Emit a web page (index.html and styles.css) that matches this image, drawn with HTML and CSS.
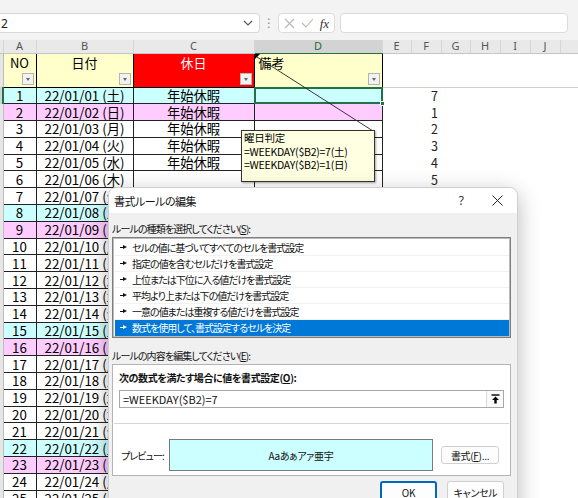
FILE: index.html
```html
<!DOCTYPE html>
<html lang="ja">
<head>
<meta charset="utf-8">
<title>書式ルールの編集</title>
<link rel="stylesheet" href="styles.css">
</head>
<body>
<div class="topbar">
  <div class="namebox"><span>2</span>
    <svg width="10" height="6" viewBox="0 0 10 6"><path d="M1 1l4 4 4-4" fill="none" stroke="#555" stroke-width="1.1"/></svg>
  </div>
  <div class="dots">⋮</div>
  <div class="fxgroup">
    <svg width="11" height="11" viewBox="0 0 11 11"><path d="M1 1l9 9M10 1l-9 9" stroke="#b8b8b8" stroke-width="1.1"/></svg>
    <svg width="13" height="10" viewBox="0 0 13 10"><path d="M1 5l4 4 7-8" fill="none" stroke="#b8b8b8" stroke-width="1.1"/></svg>
    <span class="fx">fx</span>
  </div>
  <div class="formula"></div>
</div>

<table class="sheet">
  <colgroup>
    <col class="w-stub"><col class="w-a"><col class="w-b"><col class="w-c"><col class="w-d">
    <col class="w-e"><col class="w-f"><col class="w-g"><col class="w-h"><col class="w-i"><col class="w-j"><col class="w-k">
  </colgroup>
  <tr class="colhead">
    <th class="stub"></th><th>A</th><th>B</th><th>C</th><th class="on">D</th><th>E</th><th>F</th><th>G</th><th>H</th><th>I</th><th>J</th><th></th>
  </tr>
  <tr class="hrow">
    <td class="stub"></td>
    <td class="hd">NO<span class="flt"></span></td>
    <td class="hd">日付<span class="flt"></span></td>
    <td class="hd red">休日<span class="flt"></span></td>
    <td class="hd left"><span class="note"></span>備考<span class="flt"></span></td>
    <td class="fr" colspan="7"></td>
  </tr>
  <tr class="r sat"><td class="stub sel"></td><td class="b">1</td><td class="b">22/01/01 (土)</td><td class="b">年始休暇</td><td class="b cur"><span class="handle"></span></td><td></td><td class="v">7</td><td colspan="5"></td></tr>
  <tr class="r sun"><td class="stub"></td><td class="b">2</td><td class="b">22/01/02 (日)</td><td class="b">年始休暇</td><td class="b"></td><td></td><td class="v">1</td><td colspan="5"></td></tr>
  <tr class="r"><td class="stub"></td><td class="b">3</td><td class="b">22/01/03 (月)</td><td class="b">年始休暇</td><td class="b"></td><td></td><td class="v">2</td><td colspan="5"></td></tr>
  <tr class="r"><td class="stub"></td><td class="b">4</td><td class="b">22/01/04 (火)</td><td class="b">年始休暇</td><td class="b"></td><td></td><td class="v">3</td><td colspan="5"></td></tr>
  <tr class="r"><td class="stub"></td><td class="b">5</td><td class="b">22/01/05 (水)</td><td class="b">年始休暇</td><td class="b"></td><td></td><td class="v">4</td><td colspan="5"></td></tr>
  <tr class="r"><td class="stub"></td><td class="b">6</td><td class="b">22/01/06 (木)</td><td class="b"></td><td class="b"></td><td></td><td class="v">5</td><td colspan="5"></td></tr>
  <tr class="r"><td class="stub"></td><td class="b">7</td><td class="b">22/01/07 (金)</td><td class="b"></td><td class="b"></td><td colspan="7"></td></tr>
  <tr class="r sat"><td class="stub"></td><td class="b">8</td><td class="b">22/01/08 (土)</td><td class="b"></td><td class="b"></td><td colspan="7"></td></tr>
  <tr class="r sun"><td class="stub"></td><td class="b">9</td><td class="b">22/01/09 (日)</td><td class="b"></td><td class="b"></td><td colspan="7"></td></tr>
  <tr class="r"><td class="stub"></td><td class="b">10</td><td class="b">22/01/10 (月)</td><td class="b"></td><td class="b"></td><td colspan="7"></td></tr>
  <tr class="r"><td class="stub"></td><td class="b">11</td><td class="b">22/01/11 (火)</td><td class="b"></td><td class="b"></td><td colspan="7"></td></tr>
  <tr class="r"><td class="stub"></td><td class="b">12</td><td class="b">22/01/12 (水)</td><td class="b"></td><td class="b"></td><td colspan="7"></td></tr>
  <tr class="r"><td class="stub"></td><td class="b">13</td><td class="b">22/01/13 (木)</td><td class="b"></td><td class="b"></td><td colspan="7"></td></tr>
  <tr class="r"><td class="stub"></td><td class="b">14</td><td class="b">22/01/14 (金)</td><td class="b"></td><td class="b"></td><td colspan="7"></td></tr>
  <tr class="r sat"><td class="stub"></td><td class="b">15</td><td class="b">22/01/15 (土)</td><td class="b"></td><td class="b"></td><td colspan="7"></td></tr>
  <tr class="r sun"><td class="stub"></td><td class="b">16</td><td class="b">22/01/16 (日)</td><td class="b"></td><td class="b"></td><td colspan="7"></td></tr>
  <tr class="r"><td class="stub"></td><td class="b">17</td><td class="b">22/01/17 (月)</td><td class="b"></td><td class="b"></td><td colspan="7"></td></tr>
  <tr class="r"><td class="stub"></td><td class="b">18</td><td class="b">22/01/18 (火)</td><td class="b"></td><td class="b"></td><td colspan="7"></td></tr>
  <tr class="r"><td class="stub"></td><td class="b">19</td><td class="b">22/01/19 (水)</td><td class="b"></td><td class="b"></td><td colspan="7"></td></tr>
  <tr class="r"><td class="stub"></td><td class="b">20</td><td class="b">22/01/20 (木)</td><td class="b"></td><td class="b"></td><td colspan="7"></td></tr>
  <tr class="r"><td class="stub"></td><td class="b">21</td><td class="b">22/01/21 (金)</td><td class="b"></td><td class="b"></td><td colspan="7"></td></tr>
  <tr class="r sat"><td class="stub"></td><td class="b">22</td><td class="b">22/01/22 (土)</td><td class="b"></td><td class="b"></td><td colspan="7"></td></tr>
  <tr class="r sun"><td class="stub"></td><td class="b">23</td><td class="b">22/01/23 (日)</td><td class="b"></td><td class="b"></td><td colspan="7"></td></tr>
  <tr class="r"><td class="stub"></td><td class="b">24</td><td class="b">22/01/24 (月)</td><td class="b"></td><td class="b"></td><td colspan="7"></td></tr>
  <tr class="r"><td class="stub"></td><td class="b">25</td><td class="b">22/01/25 (火)</td><td class="b"></td><td class="b"></td><td colspan="7"></td></tr>
</table>

<svg class="connector" width="578" height="200" viewBox="0 0 578 200"><line x1="257" y1="57" x2="373" y2="131" stroke="#222" stroke-width="0.9"/></svg>
<div class="comment">曜日判定<br>=WEEKDAY($B2)=7(土)<br>=WEEKDAY($B2)=1(日)</div>

<div class="dialog">
  <div class="titlebar">
    <span class="title">書式ルールの編集</span>
    <span class="help">?</span>
    <svg class="close" width="11" height="11" viewBox="0 0 11 11"><path d="M0.5 0.5l10 10M10.5 0.5l-10 10" stroke="#222" stroke-width="1"/></svg>
  </div>
  <div class="dbody">
    <div class="label">ルールの種類を選択してください(<u>S</u>):</div>
    <ul class="rules">
      <li><i class="arr"></i>セルの値に基づいてすべてのセルを書式設定</li>
      <li><i class="arr"></i>指定の値を含むセルだけを書式設定</li>
      <li><i class="arr"></i>上位または下位に入る値だけを書式設定</li>
      <li><i class="arr"></i>平均より上または下の値だけを書式設定</li>
      <li><i class="arr"></i>一意の値または重複する値だけを書式設定</li>
      <li class="on"><i class="arr"></i>数式を使用して、書式設定するセルを決定</li>
    </ul>
    <div class="label l2">ルールの内容を編集してください(<u>E</u>):</div>
    <div class="panel">
      <div class="blabel">次の数式を満たす場合に値を書式設定(<u>O</u>):</div>
      <div class="input">
        <span class="itext">=WEEKDAY($B2)=7</span>
        <span class="ibtn"><svg width="9" height="10" viewBox="0 0 9 10"><path d="M0.5 1h8" stroke="#000" stroke-width="1.4"/><path d="M4.5 2.5L1 6h2.3v3.5h2.4V6H8z" fill="#000"/></svg></span>
      </div>
      <div class="sep"></div>
      <div class="prow">
        <span class="plabel">プレビュー:</span>
        <div class="preview">Aaあぁアァ亜宇</div>
        <span class="btn fmt">書式(<u>F</u>)...</span>
      </div>
    </div>
    <div class="actions">
      <span class="btn big ok">OK</span>
      <span class="btn big">キャンセル</span>
    </div>
  </div>
</div>
</body>
</html>
```
FILE: styles.css
```css
* { box-sizing: border-box; margin: 0; padding: 0; }
html, body { width: 578px; height: 498px; overflow: hidden; background: #fff; }
body { position: relative; font-family: "Noto Sans CJK JP", "Noto Sans", sans-serif; color: #000; }

/* ---------- top bar ---------- */
.topbar { height: 40px; background: #f3f3f3; display: flex; align-items: flex-start; padding-top: 13px; }
.namebox { width: 260px; height: 20px; background: #fff; border: 1px solid #d8d8d8; border-left: none; border-radius: 0 4px 4px 0;
  display: flex; align-items: center; justify-content: space-between; padding: 0 6px 0 1px; font: 12px "Noto Sans", sans-serif; color: #222; }
.dots { width: 18px; text-align: center; color: #888; font: 12px/20px "DejaVu Sans", sans-serif; }
.fxgroup { width: 57px; height: 20px; background: #fff; border: 1px solid #dcdcdc; border-radius: 4px;
  display: flex; align-items: center; justify-content: space-around; padding: 0 2px; }
.fx { font: italic 13px/1 "Liberation Serif", serif; color: #333; }
.formula { margin-left: 5px; width: 228px; height: 20px; background: #fff; border: 1px solid #dcdcdc; border-radius: 4px; }

/* ---------- sheet ---------- */
.sheet { border-collapse: collapse; table-layout: fixed; width: 590px; font-size: 13px; }
.w-stub { width: 3px; } .w-a { width: 33px; } .w-b { width: 97px; } .w-c { width: 121px; } .w-d { width: 128px; }
.w-e { width: 29px; } .w-f { width: 30px; } .w-g { width: 29px; } .w-h { width: 30px; } .w-i { width: 30px; } .w-j { width: 30px; } .w-k { width: 30px; }
.sheet td, .sheet th { padding: 0; overflow: hidden; white-space: nowrap; }
.colhead th { height: 13px; background: #e9e9e9; font: 400 11px/12px "Noto Sans", sans-serif; color: #555;
  border-right: 1px solid #d6d6d6; border-bottom: 1px solid #c6c6c6; text-align: center; }
.colhead th.on { background: #d3d3d3; color: #1e6e42; border-bottom: 1px solid #217346; }
.stub { background: #e6e6e6; border-right: 1px solid #bdbdbd; }
.stub.sel { background: #d3d3d3; border-right: 2px solid #217346; }

.hrow { height: 34px; }
.hd { position: relative; background: #ffffcc; border: 1px solid #000; vertical-align: top; text-align: center;
  font-size: 13px; line-height: 18px; }
.hd.red { background: #ff0000; color: #fff; }
.hd.left { text-align: left; padding-left: 4px !important; }
.fr { border-bottom: 1px solid #cfcfcf; }
.flt { position: absolute; right: 2px; bottom: 2px; width: 12px; height: 12px; background: #f2f2f2; border: 1px solid #b4b4b4; }
.flt::after { content: ""; position: absolute; left: 3px; top: 4px; border-left: 2.5px solid transparent; border-right: 2.5px solid transparent; border-top: 3px solid #666; }
.note { position: absolute; left: 0; top: 0; border-top: 5px solid #000; border-right: 5px solid transparent; }

.r { height: 16.8px; }
.r td { line-height: 15px; }
.b { border: 1px solid #222; text-align: center; font-size: 13.3px; }
.sat .b { background: #ccffff; }
.sun .b { background: #ffccff; }
.v { text-align: right; padding-right: 3px !important; color: #222; font-size: 12.5px; }
.cur { position: relative; overflow: visible !important; }
.cur::after { content: ""; position: absolute; left: -1px; top: -1px; right: -1px; bottom: -1px; border: 2px solid #217346; }
.handle { position: absolute; right: -3px; bottom: -3px; width: 5px; height: 5px; background: #217346; border: 1px solid #fff; z-index: 1; }

/* ---------- comment ---------- */
.connector { position: absolute; left: 0; top: 0; pointer-events: none; }
.comment { position: absolute; left: 241px; top: 130px; width: 134px; height: 52px; background: #ffffe1; border: 1px solid #333;
  box-shadow: 1px 1px 2px rgba(0,0,0,0.35); padding: 0 2px; font-size: 10.5px; line-height: 13.5px; letter-spacing: -0.25px; }

/* ---------- dialog ---------- */
.dialog { position: absolute; left: 108px; top: 187px; width: 410px; height: 340px; background: #f0f0f0;
  border: 1px solid #cfcfcf; border-radius: 8px 8px 0 0; box-shadow: 0 6px 22px rgba(0,0,0,0.28);
  font-size: 10px; font-feature-settings: "palt"; letter-spacing: -0.9px; overflow: hidden; color: #111; }
.titlebar { height: 25px; background: #fff; display: flex; align-items: center; padding: 0 14px 0 5px; }
.title { flex: 1; font-size: 11px; letter-spacing: -0.5px; }
.help { font: 12px "Noto Sans", sans-serif; color: #333; margin-right: 28px; letter-spacing: 0; }
.dbody { padding: 0 6px 0 3px; }
.label { margin-top: 9px; line-height: 14px; }
.label.l2 { margin-top: 11px; }
.rules { list-style: none; margin-top: 1px; height: 101px; background: #fff; border: 1px solid #7e7e7e; box-shadow: inset 0 0 0 1px #bcbcbc; padding: 2px 1px 0 2px; }
.rules li { height: 16px; line-height: 15px; padding-left: 5px; border-bottom: 1px solid #f2f2f2; display: flex; align-items: center; letter-spacing: -1px; }
.rules li.on { background: #0078d7; color: #fff; border-bottom-color: #0078d7; }
.arr { display: inline-block; width: 7px; height: 5px; margin-right: 5px; position: relative; }
.arr::before { content: ""; position: absolute; left: 0; top: 2px; width: 4px; height: 1px; background: currentColor; }
.arr::after { content: ""; position: absolute; left: 3px; top: 0; border-top: 2.5px solid transparent; border-bottom: 2.5px solid transparent; border-left: 4px solid currentColor; }

.panel { margin-top: 1px; height: 112px; background: #fff; border: 1px solid #b4b4b4; padding: 6px 6px 0 6px; }
.blabel { font-weight: 700; line-height: 14px; letter-spacing: -0.4px; }
.input { margin-top: 5px; height: 18px; border: 1px solid #a8a8a8; display: flex; align-items: center; justify-content: space-between; }
.itext { padding-left: 3px; font-size: 11px; letter-spacing: 0; }
.ibtn { width: 17px; height: 16px; display: flex; align-items: center; justify-content: center; border-left: 1px solid #dadada; background: #fafafa; }
.sep { margin: 15px -5px 0; height: 1px; background: #d6d6d6; }
.prow { margin-top: 15px; display: flex; align-items: center; }
.plabel { width: 50px; padding-left: 2px; white-space: nowrap; }
.preview { width: 264px; height: 32px; background: #ccffff; border: 1px solid #7a7a7a; display: flex; align-items: center; justify-content: center; font-size: 10px; letter-spacing: -0.3px; }
.btn { display: inline-flex; align-items: center; justify-content: center; background: #fdfdfd; border: 1px solid #d0d0d0; border-radius: 3px; white-space: nowrap; }
.fmt { margin-left: 8px; width: 58px; height: 18px; letter-spacing: -0.3px; }
.actions { display: flex; justify-content: flex-end; gap: 10px; padding-right: 7px; margin-top: 5px; }
.big { width: 57px; height: 22px; letter-spacing: -0.3px; }
.ok { border: 2px solid #0067c0; }
```
